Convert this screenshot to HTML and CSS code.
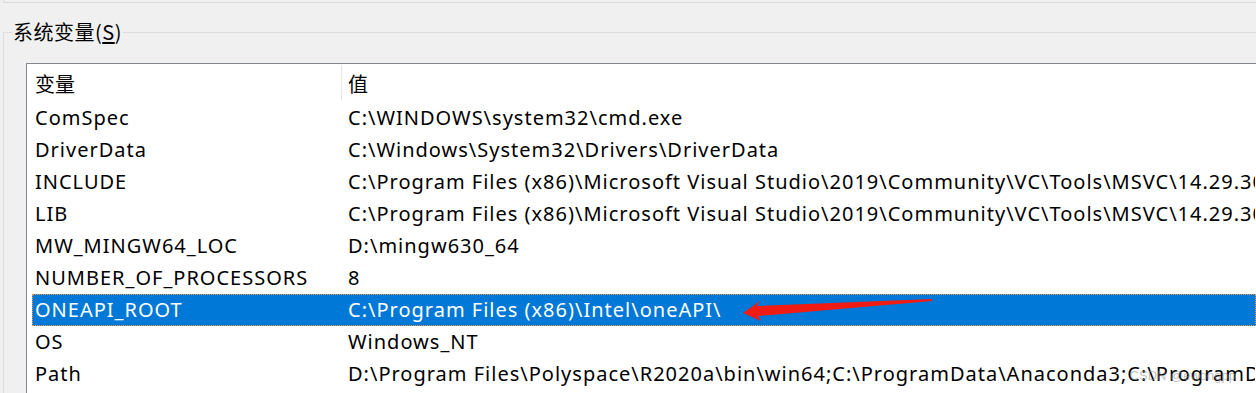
FILE: index.html
```html
<!DOCTYPE html>
<html lang="zh-CN">
<head>
    <meta charset="UTF-8">
    <title>系统变量</title>
    <link rel="stylesheet" href="styles.css">
</head>
<body>
    <div class="prev-group"></div>
    <div class="group">
        <div class="legend">系统变量(<u>S</u>)</div>
        <div class="listbox">
            <div class="row head">
                <div class="cell">变量</div>
                <div class="cell val">值</div>
            </div>
            <div class="row"><div class="cell">ComSpec</div><div class="cell val">C:\WINDOWS\system32\cmd.exe</div></div>
            <div class="row"><div class="cell">DriverData</div><div class="cell val">C:\Windows\System32\Drivers\DriverData</div></div>
            <div class="row"><div class="cell">INCLUDE</div><div class="cell val">C:\Program Files (x86)\Microsoft Visual Studio\2019\Community\VC\Tools\MSVC\14.29.30133\include</div></div>
            <div class="row"><div class="cell">LIB</div><div class="cell val">C:\Program Files (x86)\Microsoft Visual Studio\2019\Community\VC\Tools\MSVC\14.29.30133\lib\x64</div></div>
            <div class="row"><div class="cell">MW_MINGW64_LOC</div><div class="cell val">D:\mingw630_64</div></div>
            <div class="row"><div class="cell">NUMBER_OF_PROCESSORS</div><div class="cell val">8</div></div>
            <div class="row selected"><div class="cell">ONEAPI_ROOT</div><div class="cell val">C:\Program Files (x86)\Intel\oneAPI\</div></div>
            <div class="row"><div class="cell">OS</div><div class="cell val">Windows_NT</div></div>
            <div class="row"><div class="cell">Path</div><div class="cell val">D:\Program Files\Polyspace\R2020a\bin\win64;C:\ProgramData\Anaconda3;C:\ProgramData\Anaconda3\Scripts</div></div>
        </div>
    </div>

    <svg class="arrow" width="1256" height="393" viewBox="0 0 1256 393">
        <polygon fill="#f01c14" points="743,313 760,301 757,306 932,299 932,301 758,316 761,321"/>
    </svg>
    <div class="watermark">CSDN @ewongpp</div>
</body>
</html>
```

FILE: styles.css
```css
html, body {
    margin: 0;
    height: 100%;
}
body {
    background-color: #f0f0f0;
    font-family: "Noto Sans", "Noto Sans CJK SC", sans-serif;
    font-size: 20px;
    color: #000;
    overflow: hidden;
    position: relative;
}
.prev-group {
    height: 2px;
    margin-left: 3px;
    border-left: 1px solid #dcdcdc;
    border-bottom: 1px solid #dcdcdc;
}
.group {
    margin: 29px 0 0 3px;
    border-top: 1px solid #dcdcdc;
    border-left: 1px solid #dcdcdc;
}
.legend {
    width: fit-content;
    margin: -12px 0 0 8px;
    padding: 0 1px;
    line-height: 22px;
    background-color: #f0f0f0;
    font-family: "Noto Sans CJK SC", sans-serif;
    letter-spacing: 0.5px;
}
.legend u {
    text-underline-offset: 2px;
}
.listbox {
    margin: 20px 0 0 22px;
    border: 1px solid #828790;
    border-right: none;
    border-bottom: none;
    background: white;
    height: 400px;
}
.row {
    display: grid;
    grid-template-columns: 308px 1fr;
    height: 30px;
    margin-left: 5px;
    border: 1px solid transparent;
    align-items: center;
    white-space: nowrap;
    letter-spacing: 1px;
}
.cell {
    padding: 0 0 2px 2px;
    overflow: hidden;
}
.cell.val {
    padding-left: 7px;
}
.head {
    height: 35px;
    padding-bottom: 1px;
    align-items: stretch;
    letter-spacing: 0;
}
.head .cell {
    font-family: "Noto Sans CJK SC", sans-serif;
    display: flex;
    align-items: center;
    padding: 1px 0 0 2px;
}
.head .val {
    border-left: 1px solid #e5e5e5;
    padding-left: 6px;
}
.selected {
    background-color: #0078d7;
    color: white;
    border: 1px dotted #f29a4a;
}
.arrow {
    position: absolute;
    left: 0;
    top: 0;
}
.watermark {
    position: absolute;
    right: 20px;
    bottom: 10px;
    font-size: 13px;
    color: rgba(140, 140, 140, 0.55);
    font-family: "Liberation Sans", sans-serif;
}
```
